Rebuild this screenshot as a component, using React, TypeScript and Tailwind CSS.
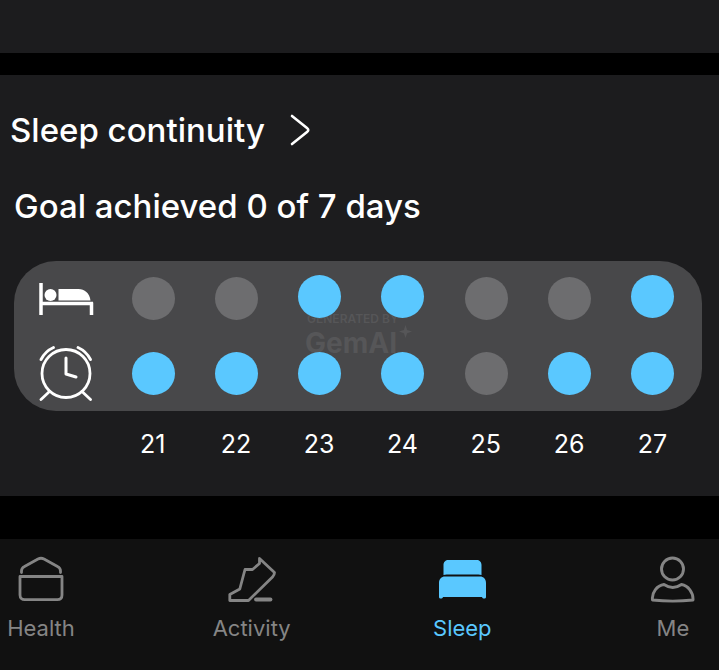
import React, { useState } from 'react';

const DAYS = [21, 22, 23, 24, 25, 26, 27];
const BEDTIME = [false, false, true, true, false, false, true];
const WAKE_UP = [true, true, true, true, false, true, true];

const BedtimeIcon = () => (
  <svg width="56" height="34" viewBox="0 0 56 34" fill="none" aria-hidden="true">
    <path d="M3 1v32M3 21.500h52M53.500 20.500v12.500" stroke="#fff" strokeWidth="3.500" />
    <circle cx="12.500" cy="13" r="6" fill="#fff" />
    <path d="M20.500 7h20c6 0 11 4 12 11.500h-32z" fill="#fff" />
  </svg>
);

const AlarmIcon = () => (
  <svg width="56" height="56" viewBox="0 0 56 56" fill="none" stroke="#fff" strokeLinecap="round" strokeLinejoin="round" aria-hidden="true">
    <circle cx="28" cy="27.500" r="24" strokeWidth="2.800" />
    <path d="M28 12V28l10 3" strokeWidth="3" />
    <path d="M3 13.500C5.500 8.500 10 4 15.500 1.500M40 1.500c5.500 2.500 10 7 12.500 12M11.500 45.500l-8.500 8M44 45.500l8.500 8" strokeWidth="2.800" />
  </svg>
);

const HealthIcon = () => (
  <svg width="48" height="48" viewBox="0 0 48 48" fill="none" stroke="currentColor" strokeWidth="2.800" strokeLinecap="round" strokeLinejoin="round" aria-hidden="true">
    <path d="M4.500 17.500v-1.500c0-2 1-3.500 3-4.500L21 4c2-1 4-1 6 0l13.500 7.500c2 1 3 2.500 3 4.500v1.500" />
    <path d="M3 21.500h42V40c0 3-2 4.700-4.700 4.700H7.700C5 44.700 3 43 3 40z" />
  </svg>
);

const ActivityIcon = () => (
  <svg width="48" height="48" viewBox="0 0 48 48" fill="none" stroke="currentColor" strokeWidth="2.800" strokeLinecap="round" strokeLinejoin="round" aria-hidden="true">
    <path d="M31.500 3.500l15 14c0 1.500-.500 3-2 4.500L20.500 45.500H1.800v-6l10-5.500L17 14.500h7.500l7-6z" />
    <path d="M28 44.500h14.500" strokeWidth="3.800" />
  </svg>
);

const SleepIcon = () => (
  <svg width="48" height="48" viewBox="0 0 48 48" fill="currentColor" aria-hidden="true">
    <path d="M5.500 20V10c0-3 2-5 5-5h28c3 0 5 2 5 5v10l-3-.500h-32z" />
    <path d="M1 42V28c0-4 2.500-6.500 6-6.500h35c3.500 0 6 2.500 6 6.500v14c0 2-3.500 2-4 0H5c-.500 2-4 2-4 0z" />
  </svg>
);

const MeIcon = () => (
  <svg width="48" height="48" viewBox="0 0 48 48" fill="none" stroke="currentColor" strokeWidth="2.900" strokeLinejoin="round" aria-hidden="true">
    <circle cx="23.500" cy="14" r="11" />
    <path d="M15 29.500c-7 1-12.500 8-11.500 15.500 13.500 1.500 27 1.500 40.500 0 .500-7.500-5-14.500-11.500-15.500-6 4-11.500 4-17.500 0z" />
  </svg>
);

const TABS = [
  { name: 'Health', icon: HealthIcon },
  { name: 'Activity', icon: ActivityIcon },
  { name: 'Sleep', icon: SleepIcon },
  { name: 'Me', icon: MeIcon },
];

interface DotRowProps {
  label: string;
  values: boolean[];
  onClassName?: string;
}

const DotRow: React.FC<DotRowProps> = ({ label, values, onClassName = '' }) => (
  <ul className="grid flex-1 grid-cols-7 items-center justify-items-center" aria-label={label}>
    {values.map((on, i) => (
      <li
        key={DAYS[i]}
        title={`${DAYS[i]}: ${on ? 'achieved' : 'missed'}`}
        className={`relative size-[43px] rounded-full ${on ? `bg-[#5ac8ff] ${onClassName}` : 'bg-[#6d6d6f]'}`}
      />
    ))}
  </ul>
);

export default function App() {
  const [activeTab, setActiveTab] = useState('Sleep');

  return (
    <div className="min-h-screen flex flex-col bg-black font-['Inter','Liberation_Sans',sans-serif] text-white">
      <div className="h-[53px] bg-[#1c1c1e]" />

      {/* Sleep continuity */}
      <main className="mt-[22px] bg-[#1c1c1e] pt-8 pb-9">
        <h1 className="pl-[10px]">
          <button className="flex items-center gap-[25px] text-[33px] leading-[46px] font-medium">
            Sleep continuity
            <svg width="20" height="32" viewBox="0 0 20 32" fill="none" stroke="#fff" strokeWidth="2.600" strokeLinecap="round" strokeLinejoin="round" aria-hidden="true">
              <path d="M2 2l15 12c1.700 1.400 1.700 2.600 0 4L2 30" />
            </svg>
          </button>
        </h1>
        <p className="mt-[30px] pl-[14px] text-[33px] leading-[46px] font-medium">Goal achieved 0 of 7 days</p>

        <div className="mr-[17px] ml-[14px]">
          <div className="relative mt-8 h-[150px] rounded-[42px] bg-[#48484a] pr-2">
            <div className="absolute top-[50px] left-[291px] text-[#565658]">
              <p className="pl-[2px] text-xs leading-4 font-semibold">GENERATED BY</p>
              <p className="text-[28px] leading-8 font-bold">GemAI</p>
              <svg className="absolute top-3.5 left-[94px]" width="13" height="13" viewBox="0 0 12 12" fill="currentColor" aria-hidden="true">
                <path d="M6 0l1.500 4.500L12 6 7.500 7.500 6 12 4.500 7.500 0 6l4.500-1.500z" />
              </svg>
            </div>
            <div className="flex h-[75px] items-center">
              <div className="w-[98px] shrink-0 pl-6">
                <BedtimeIcon />
              </div>
              <DotRow label="Bedtime" values={BEDTIME} onClassName="mb-1" />
            </div>
            <div className="flex h-[75px] items-center">
              <div className="w-[98px] shrink-0 pl-6">
                <AlarmIcon />
              </div>
              <DotRow label="Wake up" values={WAKE_UP} />
            </div>
          </div>
          <ul className="mt-[17px] grid grid-cols-7 pr-2 pl-[97px] text-center text-[25px] leading-8">
            {DAYS.map(day => (
              <li key={day}>{day}</li>
            ))}
          </ul>
        </div>
      </main>

      {/* Tab bar */}
      <nav className="mt-[43px] flex flex-1 items-start justify-between bg-[#111111] pt-4 pr-1.5 pl-px">
        {TABS.map(({ name, icon: Icon }) => (
          <button
            key={name}
            onClick={() => setActiveTab(name)}
            aria-current={activeTab === name ? 'page' : undefined}
            className={`flex w-20 flex-col items-center gap-[11px] text-[22px] leading-7 ${
              activeTab === name ? 'text-[#5ac8ff]' : 'text-[#858585]'
            }`}
          >
            <Icon />
            {name}
          </button>
        ))}
      </nav>
    </div>
  );
}
